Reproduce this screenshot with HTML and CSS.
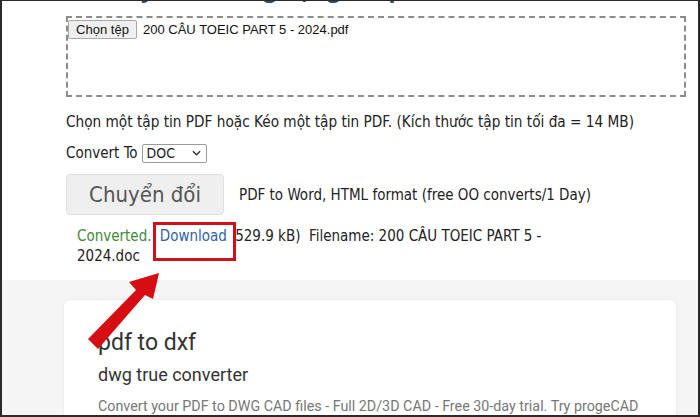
FILE: index.html
```html
<!DOCTYPE html>
<html lang="vi">
<head>
<meta charset="utf-8">
<title>PDF to Word</title>
<link rel="stylesheet" href="styles.css">
</head>
<body>
<div class="frame">
  <section class="top">
    <h1 class="title">Chuyển đổi ứng dụng file pdf</h1>
    <div class="dropzone">
      <div class="file-row">
        <span class="file-btn">Chọn tệp</span>
        <span class="file-name">200 CÂU TOEIC PART 5 - 2024.pdf</span>
      </div>
    </div>
    <p class="hint">Chọn một tập tin PDF hoặc Kéo một tập tin PDF. (Kích thước tập tin tối đa = 14 MB)</p>
    <div class="convert-row">
      <span>Convert To</span>
      <span class="select">DOC <svg class="chev" viewBox="0 0 10 6" width="9" height="6"><path d="M1 1 L5 5 L9 1" fill="none" stroke="#333" stroke-width="1.6"/></svg></span>
    </div>
    <div class="action-row">
      <span class="btn">Chuyển đổi</span>
      <span class="note">PDF to Word, HTML format (free OO converts/1 Day)</span>
    </div>
    <p class="result"><span class="ok">Converted.</span> <span class="dl">Download</span> 529.9 kB)&nbsp; Filename: 200 CÂU TOEIC PART 5 -<br>2024.doc</p>
  </section>
  <section class="ads">
    <div class="card">
      <h2 class="card-title">pdf to dxf</h2>
      <h3 class="card-sub">dwg true converter</h3>
      <p class="card-desc">Convert your PDF to DWG CAD files - Full 2D/3D CAD - Free 30-day trial. Try progeCAD</p>
    </div>
  </section>
  <svg class="arrow" viewBox="0 0 700 417" width="700" height="417">
    <polygon points="88,339 136,290 129,282 159,273 153,299 145,295 98,349" fill="#d60d12"/>
  </svg>
</div>
</body>
</html>
```

FILE: styles.css
```css
html, body {
  margin: 0;
  padding: 0;
}
body {
  background: #fff;
}
.frame {
  position: relative;
  width: 700px;
  height: 417px;
  box-sizing: border-box;
  border: 2px solid #2a2a2a;
  border-top-width: 1px;
  overflow: hidden;
  background: #f5f5f5;
  font-family: "DejaVu Sans Condensed", "DejaVu Sans", sans-serif;
  font-stretch: condensed;
  color: #222;
}
.top {
  background: #fff;
  padding: 0 10px 14px 64px;
}
.title {
  margin: -27px 0 0 30px;
  font: bold 23px/28px "Open Sans", sans-serif;
  color: #2b4d78;
  white-space: nowrap;
}
.dropzone {
  margin-top: 14px;
  width: 620px;
  height: 81px;
  box-sizing: border-box;
  border: 2px dashed #8c8c8c;
  padding-top: 2px;
}
.file-row {
  display: flex;
  align-items: center;
  gap: 6px;
  font: 13px "Liberation Sans", Arial, sans-serif;
  color: #111;
}
.file-btn {
  display: inline-block;
  height: 19px;
  line-height: 17px;
  box-sizing: border-box;
  padding: 0 4px;
  background: #efefef;
  border: 1px solid #a8a8a8;
  border-radius: 2px;
  width: 69px;
  text-align: center;
}
.hint {
  margin: 15px 0 0;
  font-size: 15.2px;
  line-height: 20px;
}
.convert-row {
  margin-top: 11px;
  display: flex;
  align-items: center;
  gap: 4px;
  font-size: 15px;
  line-height: 20px;
}
.select {
  display: inline-flex;
  align-items: center;
  justify-content: space-between;
  width: 65px;
  height: 19px;
  box-sizing: border-box;
  border: 1px solid #9a9a9a;
  border-radius: 2px;
  padding: 0 5px 0 4px;
  font-size: 14px;
  background: #fff;
}
.action-row {
  margin-top: 11px;
  display: flex;
  align-items: center;
  gap: 15px;
  font-size: 15px;
}
.btn {
  display: inline-flex;
  align-items: center;
  justify-content: center;
  width: 158px;
  height: 41px;
  box-sizing: border-box;
  background: #efefef;
  border: 1px solid #dedede;
  border-radius: 4px;
  font-size: 22px;
  color: #555;
}
.result {
  margin: 11px 0 0 11px;
  font-size: 15px;
  line-height: 20px;
}
.ok {
  color: #3f8a36;
}
.dl {
  position: relative;
  color: #2f62a0;
  margin-left: 4px;
  margin-right: 4px;
}
.dl::after {
  content: "";
  position: absolute;
  left: -7px;
  right: -9px;
  top: -5px;
  bottom: -16px;
  border: 3px solid #d20f18;
}
.ads {
  padding: 20px 0 0 62px;
}
.card {
  width: 612px;
  height: 160px;
  background: #fff;
  border-radius: 6px;
  box-shadow: 0 0 3px rgba(0,0,0,0.08);
  padding: 29px 0 0 34px;
  box-sizing: border-box;
  font-family: Roboto, sans-serif;
  font-stretch: normal;
}
.card-title {
  margin: 0;
  font-size: 23px;
  line-height: 28px;
  font-weight: 400;
  color: #333;
}
.card-sub {
  margin: 7px 0 0;
  font-size: 18px;
  line-height: 22px;
  font-weight: 400;
  color: #333;
}
.card-desc {
  margin: 11px 0 0;
  font-size: 14.3px;
  line-height: 18px;
  font-weight: 400;
  color: #777;
  white-space: nowrap;
}
.arrow {
  position: absolute;
  left: -2px;
  top: -1px;
  width: 700px;
  height: 417px;
  pointer-events: none;
}
```
